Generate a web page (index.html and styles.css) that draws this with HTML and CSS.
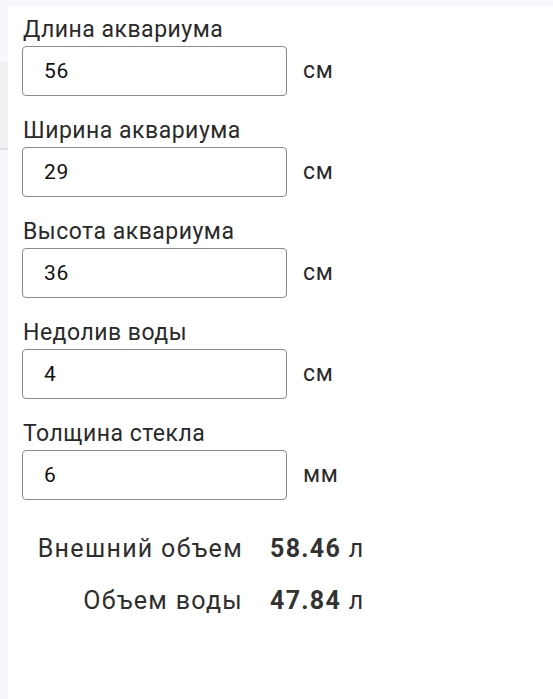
FILE: index.html
```html
<!DOCTYPE html>
<html lang="ru">
<head>
  <meta charset="UTF-8" />
  <meta name="viewport" content="width=device-width, initial-scale=1.0"/>
  <title>Калькулятор аквариума</title>
  <link rel="stylesheet" href="styles.css">
</head>
<body>
  <div class="page">
    <div class="side"><div class="side-tab"></div></div>

    <div class="card">
      <div class="field">
        <label for="len">Длина аквариума</label>
        <div class="row">
          <input id="len" type="text" value="56">
          <span class="unit">см</span>
        </div>
      </div>

      <div class="field">
        <label for="wid">Ширина аквариума</label>
        <div class="row">
          <input id="wid" type="text" value="29">
          <span class="unit">см</span>
        </div>
      </div>

      <div class="field">
        <label for="hei">Высота аквариума</label>
        <div class="row">
          <input id="hei" type="text" value="36">
          <span class="unit">см</span>
        </div>
      </div>

      <div class="field">
        <label for="gap">Недолив воды</label>
        <div class="row">
          <input id="gap" type="text" value="4">
          <span class="unit">см</span>
        </div>
      </div>

      <div class="field">
        <label for="glass">Толщина стекла</label>
        <div class="row">
          <input id="glass" type="text" value="6">
          <span class="unit">мм</span>
        </div>
      </div>

      <div class="results">
        <span class="res-label">Внешний объем</span>
        <span class="res-value"><b>58.46</b> л</span>
        <span class="res-label">Объем воды</span>
        <span class="res-value"><b>47.84</b> л</span>
      </div>
    </div>
  </div>
</body>
</html>
```

FILE: styles.css
```css
body {
  margin: 0;
  font-family: Roboto, "Liberation Sans", sans-serif;
  background: #f7f8fc;
  color: #2a2a2a;
}

.page {
  display: flex;
  padding-top: 7px;
  min-height: 692px;
}

.side {
  width: 8px;
  flex-shrink: 0;
}
.side-tab {
  margin-top: 55px;
  height: 86px;
  background: #f0f0f2;
  border-bottom: 2px solid #e2e2e4;
}

.card {
  flex: 1;
  background: #fff;
  padding: 9px 0 0 14px;
}

.field {
  margin-bottom: 21px;
}
.field label {
  display: block;
  font-size: 23px;
  line-height: 28px;
  letter-spacing: 0.5px;
  padding-left: 1px;
  color: #2a2a2a;
}

.row {
  display: flex;
  align-items: center;
}
.row input {
  box-sizing: border-box;
  width: 265px;
  height: 50px;
  margin: 2px 0 0;
  padding: 0 21px;
  border: 1px solid #8a8a8a;
  border-radius: 4px;
  font-family: inherit;
  font-size: 21px;
  letter-spacing: 0.6px;
  color: #111;
  background: #fff;
  outline: none;
}
.unit {
  margin-left: 16px;
  font-size: 23px;
  letter-spacing: 0.6px;
  color: #2a2a2a;
}

.results {
  display: grid;
  grid-template-columns: 221px auto;
  column-gap: 27px;
  row-gap: 16px;
  margin-top: 31px;
  font-size: 25px;
  line-height: 36px;
  letter-spacing: 1.3px;
  color: #2e2e2e;
}
.res-label {
  text-align: right;
}
.res-value b {
  font-weight: 700;
  color: #333;
}
```
